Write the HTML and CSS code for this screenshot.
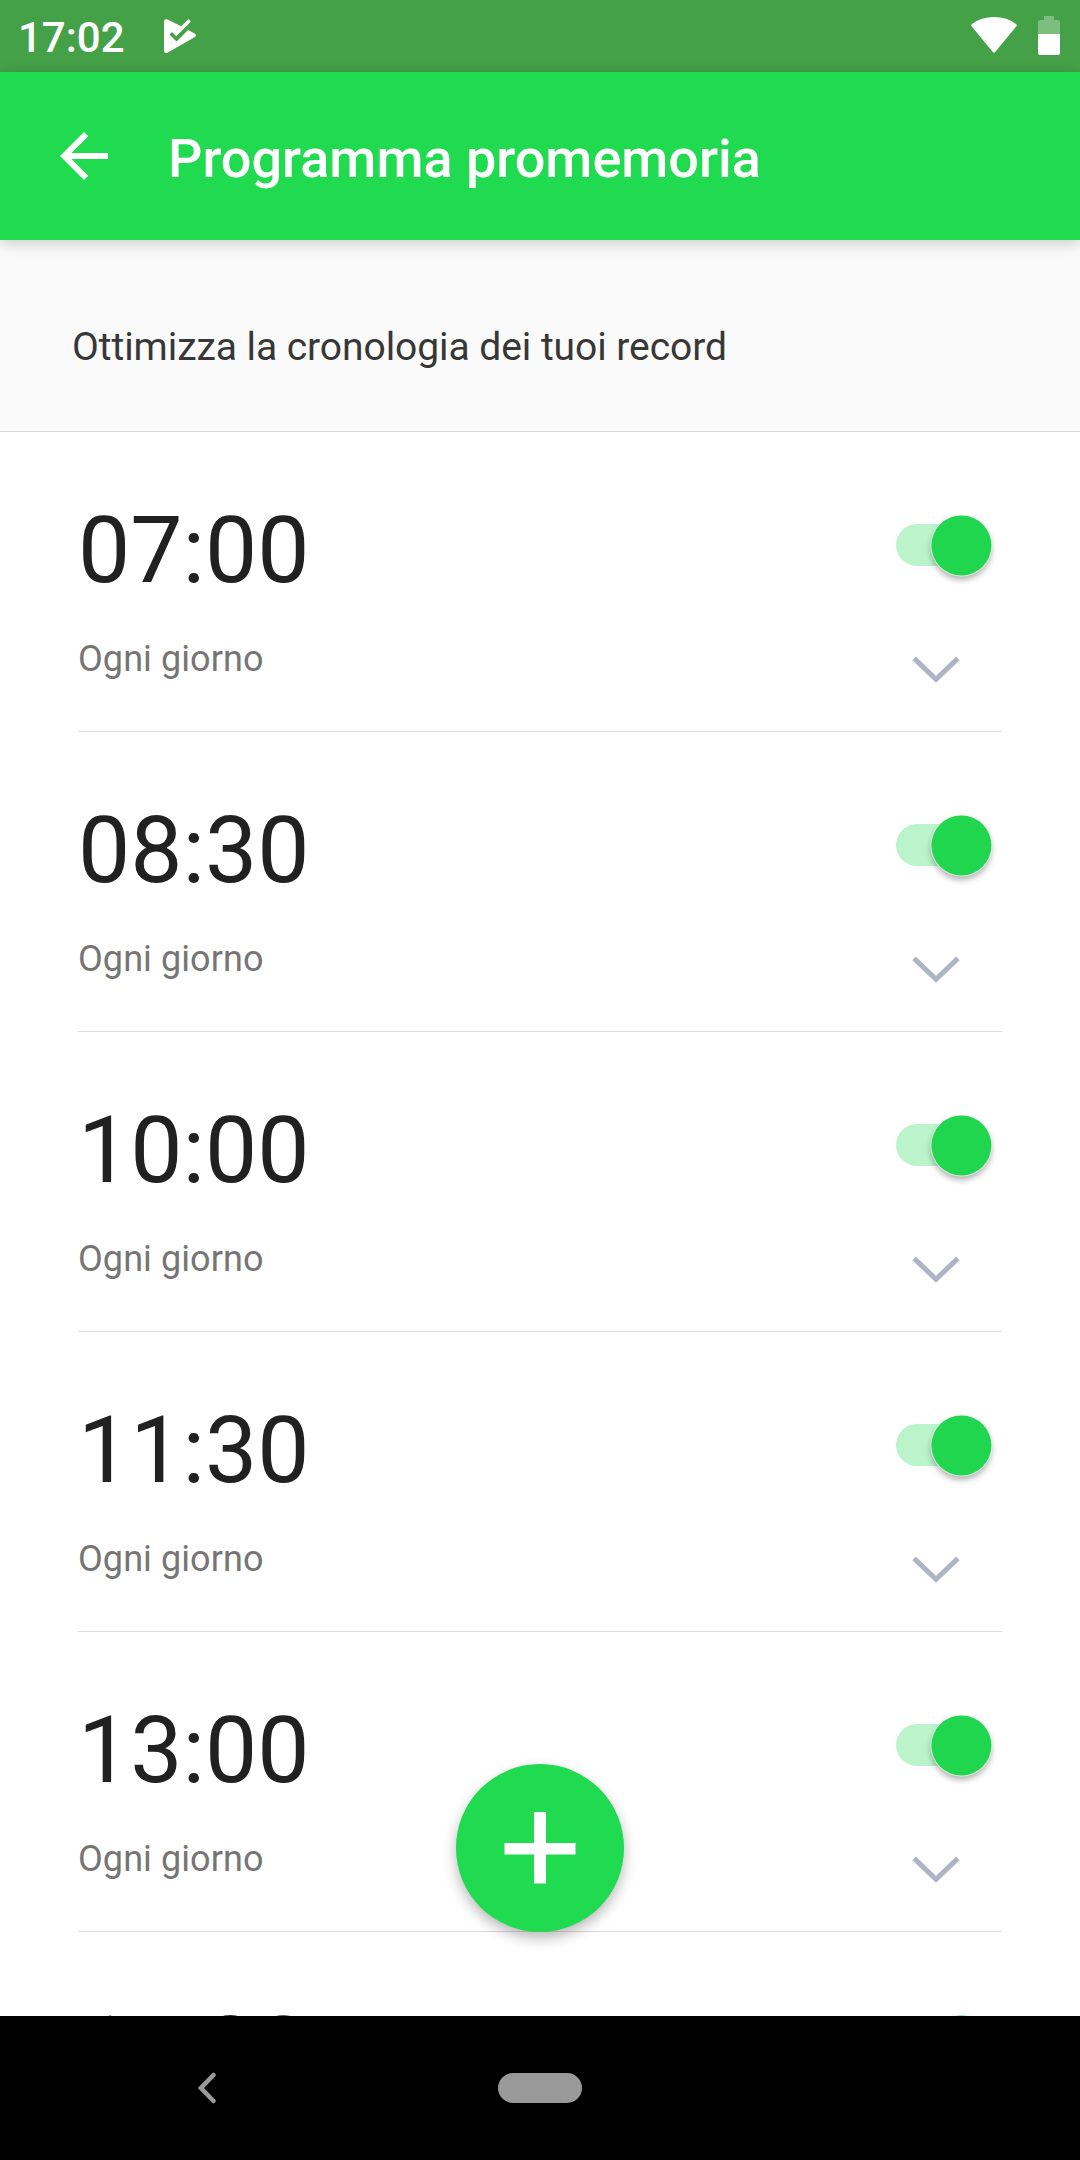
FILE: index.html
```html
<!DOCTYPE html>
<html lang="it">
<head>
<meta charset="utf-8">
<title>Programma promemoria</title>
<link rel="stylesheet" href="styles.css">
</head>
<body>
<svg width="0" height="0" class="defs">
  <symbol id="chevron" viewBox="0 0 48 28"><path d="M2.1 2.4 24 23.2 45.9 2.4" fill="none" stroke="#adb4c4" stroke-width="5"/></symbol>
</svg>
<div class="screen">
  <div class="status">
    <span class="clock">17:02</span>
    <svg class="play" width="32" height="34" viewBox="0 0 32 34"><path fill="#fff" d="M0 2.2Q0 .2 2 .2H3L17.2 7.2 24 .6Q25.3 0 26.5 1.7V3L12.2 17.2 8 13 5.5 15.500 12.500 22.500 24 10.900 31 14.700Q33 16.200 31 18L3 34Q0 34 0 32Z"/></svg>
    <span class="spacer"></span>
    <svg class="wifi" width="46" height="36" viewBox="0 0 46 36"><path fill="#fff" d="M.6 7.200Q10 0 23 0T45.400 7.200Q46.200 8.500 45.200 9.500L24.200 35Q23 36.500 21.800 35L.8 9.500Q-.2 8.500.6 7.200Z"/></svg>
    <svg class="battery" width="22" height="39" viewBox="0 0 22 39"><path fill="#fff" fill-opacity=".3" d="M6 0H16V4H20Q22 4 22 6V18H0V6Q0 4 2 4H6Z"/><path fill="#fff" d="M0 18H22V37Q22 39 20 39H2Q0 39 0 37Z"/></svg>
  </div>
  <header class="appbar">
    <svg width="72" height="72" viewBox="0 0 24 24"><path fill="#fff" d="M20 11H7.830l5.590-5.590L12 4l-8 8 8 8 1.410-1.410L7.830 13H20v-2z"/></svg>
    <h1>Programma promemoria</h1>
  </header>
  <div class="hint">Ottimizza la cronologia dei tuoi record</div>
  <main class="list">
    <section class="row"><div class="info"><div class="time">07:00</div><div class="days">Ogni giorno</div></div><div class="controls"><div class="switch"></div><svg class="chev" width="48" height="28"><use href="#chevron"/></svg></div></section>
    <section class="row"><div class="info"><div class="time">08:30</div><div class="days">Ogni giorno</div></div><div class="controls"><div class="switch"></div><svg class="chev" width="48" height="28"><use href="#chevron"/></svg></div></section>
    <section class="row"><div class="info"><div class="time">10:00</div><div class="days">Ogni giorno</div></div><div class="controls"><div class="switch"></div><svg class="chev" width="48" height="28"><use href="#chevron"/></svg></div></section>
    <section class="row"><div class="info"><div class="time">11:30</div><div class="days">Ogni giorno</div></div><div class="controls"><div class="switch"></div><svg class="chev" width="48" height="28"><use href="#chevron"/></svg></div></section>
    <section class="row"><div class="info"><div class="time">13:00</div><div class="days">Ogni giorno</div></div><div class="controls"><div class="switch"></div><svg class="chev" width="48" height="28"><use href="#chevron"/></svg></div></section>
    <section class="row"><div class="info"><div class="time">14:30</div></div><div class="controls"><div class="switch"></div></div></section>
  </main>
  <div class="fab"><svg width="72" height="72" viewBox="0 0 72 72"><path fill="#fff" d="M30 0H42V31H71.500V42.500H42V71.500H30V42.500H.5V31H30Z"/></svg></div>
  <nav class="nav">
    <svg class="back" width="18" height="32" viewBox="0 0 18 32"><path d="M15.500 3 3 16 15.500 29" fill="none" stroke="#999" stroke-width="4.500" stroke-linecap="round"/></svg>
    <div class="pill"></div>
  </nav>
</div>
</body>
</html>
```
FILE: styles.css
```css
body { margin: 0; font-family: Roboto, sans-serif; background: #fff; }
svg { display: block; flex: none; }
.defs { position: absolute; }
.screen { position: relative; width: 1080px; height: 2160px; overflow: hidden; display: flex; flex-direction: column; }
.status { box-sizing: border-box; flex: none; height: 72px; background: #45a147; display: flex; align-items: flex-start; padding: 0 20px 0 18px; color: #fff; }
.clock { font-size: 42px; font-weight: 500; line-height: 50px; padding-top: 13px; width: 146px; }
.play { margin-top: 19px; }
.spacer { flex: 1; }
.wifi { margin: 17px 21px 0 0; }
.battery { margin-top: 16px; }
.appbar { box-sizing: border-box; flex: none; height: 168px; padding: 0 48px; background: #20da50; display: flex; align-items: center; gap: 48px; position: relative; z-index: 1; box-shadow: 0 3px 14px rgba(0,0,0,.2); }
.appbar h1 { margin: 0; padding-top: 5px; color: #fff; font-size: 54px; font-weight: 500; line-height: 64px; }
.hint { box-sizing: border-box; flex: none; height: 192px; padding: 84px 72px 0; background: #fafafa; border-bottom: 1px solid #d9d9d9; color: #373737; font-size: 39px; line-height: 46px; letter-spacing: -.06px; }
.list { flex: 1; min-height: 0; overflow: hidden; padding: 0 78px; }
.row { box-sizing: border-box; height: 300px; border-bottom: 1px solid #dcdcdc; display: flex; justify-content: space-between; }
.info { padding-top: 64px; }
.time { font-size: 93px; line-height: 109px; color: #212121; }
.days { margin-top: 33px; font-size: 36px; line-height: 42px; color: #757575; letter-spacing: .08px; }
.controls { width: 106px; padding-top: 83px; }
.switch { position: relative; width: 95px; height: 61px; display: flex; align-items: flex-start; justify-content: flex-end; }
.switch::before { content: ""; position: absolute; left: 0; top: 9px; width: 90px; height: 42px; border-radius: 21px; background: #bbf3cb; }
.switch::after { content: ""; position: relative; width: 60px; height: 60px; border-radius: 50%; background: #20d64f; box-shadow: 0 0 0 1px rgba(240,240,240,.8), 0 4px 6px rgba(0,0,0,.33); transform: translate(.4px, .5px); }
.chev { margin: 80px 0 0 16px; }
.fab { position: absolute; left: 456px; top: 1764px; width: 168px; height: 168px; border-radius: 50%; background: #20da50; display: flex; align-items: center; justify-content: center; box-shadow: 0 6px 14px rgba(0,0,0,.28); }
.nav { flex: none; height: 144px; background: #000; display: flex; align-items: center; padding-left: 198px; position: relative; z-index: 2; }
.pill { width: 84px; height: 30px; border-radius: 15px; background: #999; margin-left: 282px; }
```
